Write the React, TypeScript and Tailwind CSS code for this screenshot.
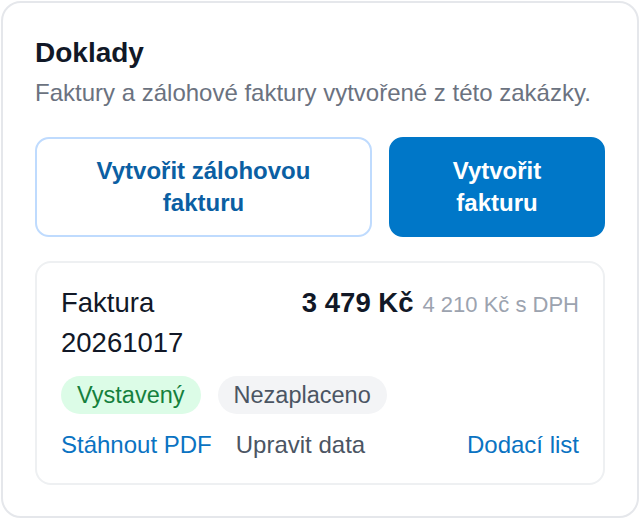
const App = () => {
  return (
    <div className="p-px bg-white" style={{ fontFamily: '"Liberation Sans", Arial, sans-serif' }}>
      <section className="rounded-[20px] border-2 border-[#e5e7eb] bg-white px-8 pt-8 pb-[31px]">
        {/* Header */}
        <h2 className="text-[28px] leading-[35px] font-bold text-[#111827]">Doklady</h2>
        <p className="mt-[7px] text-[24px] leading-8 text-[#6b7280]">
          Faktury a zálohové faktury vytvořené z této zakázky.
        </p>

        {/* Actions */}
        <div className="mt-[28px] flex gap-[17px]">
          <button className="flex-1 rounded-[14px] border-2 border-[#bfdbfe] bg-white px-6 py-4 text-[24px] leading-8 font-bold text-[#0b5fa3]">
            Vytvořit zálohovou fakturu
          </button>
          <button className="w-[216px] rounded-[14px] border-2 border-[#0077c8] bg-[#0077c8] px-6 py-4 text-[24px] leading-8 font-bold text-white">
            Vytvořit fakturu
          </button>
        </div>

        {/* Invoice card */}
        <div className="mt-6 rounded-[16px] border-2 border-[#eef0f2] bg-white px-6 pt-5 pb-[22px]">
          <div className="flex items-start justify-between gap-4">
            <div className="text-[27.5px] leading-10 text-[#111827]">
              <div>Faktura</div>
              <div>20261017</div>
            </div>
            <div className="flex items-baseline gap-[9px] leading-10">
              <span className="text-[27.5px] font-bold text-[#111827]">3 479 Kč</span>
              <span className="text-[22px] text-[#9ca3af]">4 210 Kč s DPH</span>
            </div>
          </div>

          <div className="mt-[13px] flex gap-[17px]">
            <span className="rounded-full bg-[#dcfce7] px-4 text-[23.5px] leading-[38px] text-[#15803d]">
              Vystavený
            </span>
            <span className="rounded-full bg-[#f3f4f6] px-4 text-[23.5px] leading-[38px] text-[#4b5563]">
              Nezaplaceno
            </span>
          </div>

          <div className="mt-[15px] flex items-center gap-6 text-[24px] leading-8">
            <a className="text-[#0a73c2]">Stáhnout PDF</a>
            <a className="text-[#4b5563]">Upravit data</a>
            <a className="ml-auto text-[#0a73c2]">Dodací list</a>
          </div>
        </div>
      </section>
    </div>
  );
};

export default App;
